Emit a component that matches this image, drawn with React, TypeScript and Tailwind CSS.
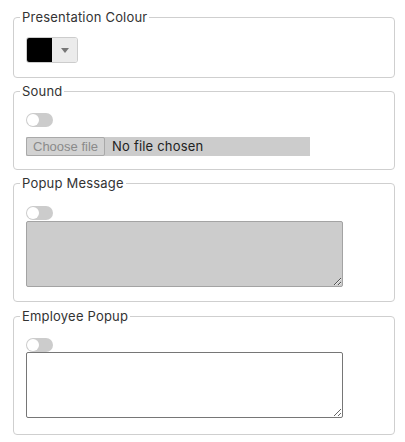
const font = "font-['Inter','Liberation_Sans',sans-serif]";

function Toggle() {
  return (
    <div className="w-[27px] h-[14px] rounded-full bg-[#cccccc] relative">
      <div className="absolute left-[1px] top-[1px] w-[12px] h-[12px] rounded-full bg-white" />
    </div>
  );
}

function Group({ title, children, className }: { title: string; children: React.ReactNode; className?: string }) {
  return (
    <fieldset className={`border border-[#cfcfcf] rounded-[4px] px-[6px] ${className ?? ''}`}>
      <legend className="px-[2px] text-[13px] leading-[18px] tracking-[0.2px] text-[#333]">{title}</legend>
      <div className="pl-[6px]">{children}</div>
    </fieldset>
  );
}

export default function App() {
  return (
    <div className={`bg-white w-[405px] h-[442px] pl-[13px] pr-[10px] pt-[8px] ${font}`}>
      <Group title="Presentation Colour" className="pb-[14px]">
        <div className="mt-[11px] flex w-[52px] h-[26px] border border-[#cccccc] rounded-[3px] overflow-hidden">
          <div className="w-[25px] bg-black" />
          <div className="flex-1 bg-[#ebebeb] flex items-center justify-center">
            <svg width="8" height="5" viewBox="0 0 8 5">
              <path d="M0 0 L8 0 L4 5 Z" fill="#777" />
            </svg>
          </div>
        </div>
      </Group>

      <Group title="Sound" className="mt-[4px] pb-[13px]">
        <div className="mt-[13px]">
          <Toggle />
        </div>
        <div className="mt-[10px] w-[284px] h-[19px] bg-[#cccccc] flex items-center">
          <span className="h-[19px] px-[6px] flex items-center border border-[#a9a9a9] bg-[#d2d2d2] text-[#8a8a8a] text-[13px] font-['Liberation_Sans',sans-serif] rounded-[2px]">
            Choose file
          </span>
          <span className="ml-[7px] text-[13px] tracking-[0.2px] text-[#222]">No file chosen</span>
        </div>
      </Group>

      <Group title="Popup Message" className="mt-[4px] pb-[14px]">
        <div className="mt-[14px]">
          <Toggle />
        </div>
        <textarea
          readOnly
          className="block mt-[1px] w-[317px] h-[66px] bg-[#cccccc] border border-[#a3a3a3] rounded-[2px]"
        />
      </Group>

      <Group title="Employee Popup" className="mt-[5px] pb-[16px]">
        <div className="mt-[13px]">
          <Toggle />
        </div>
        <textarea
          readOnly
          className="block w-[317px] h-[66px] bg-white border border-[#767676] rounded-[2px]"
        />
      </Group>
    </div>
  );
}
